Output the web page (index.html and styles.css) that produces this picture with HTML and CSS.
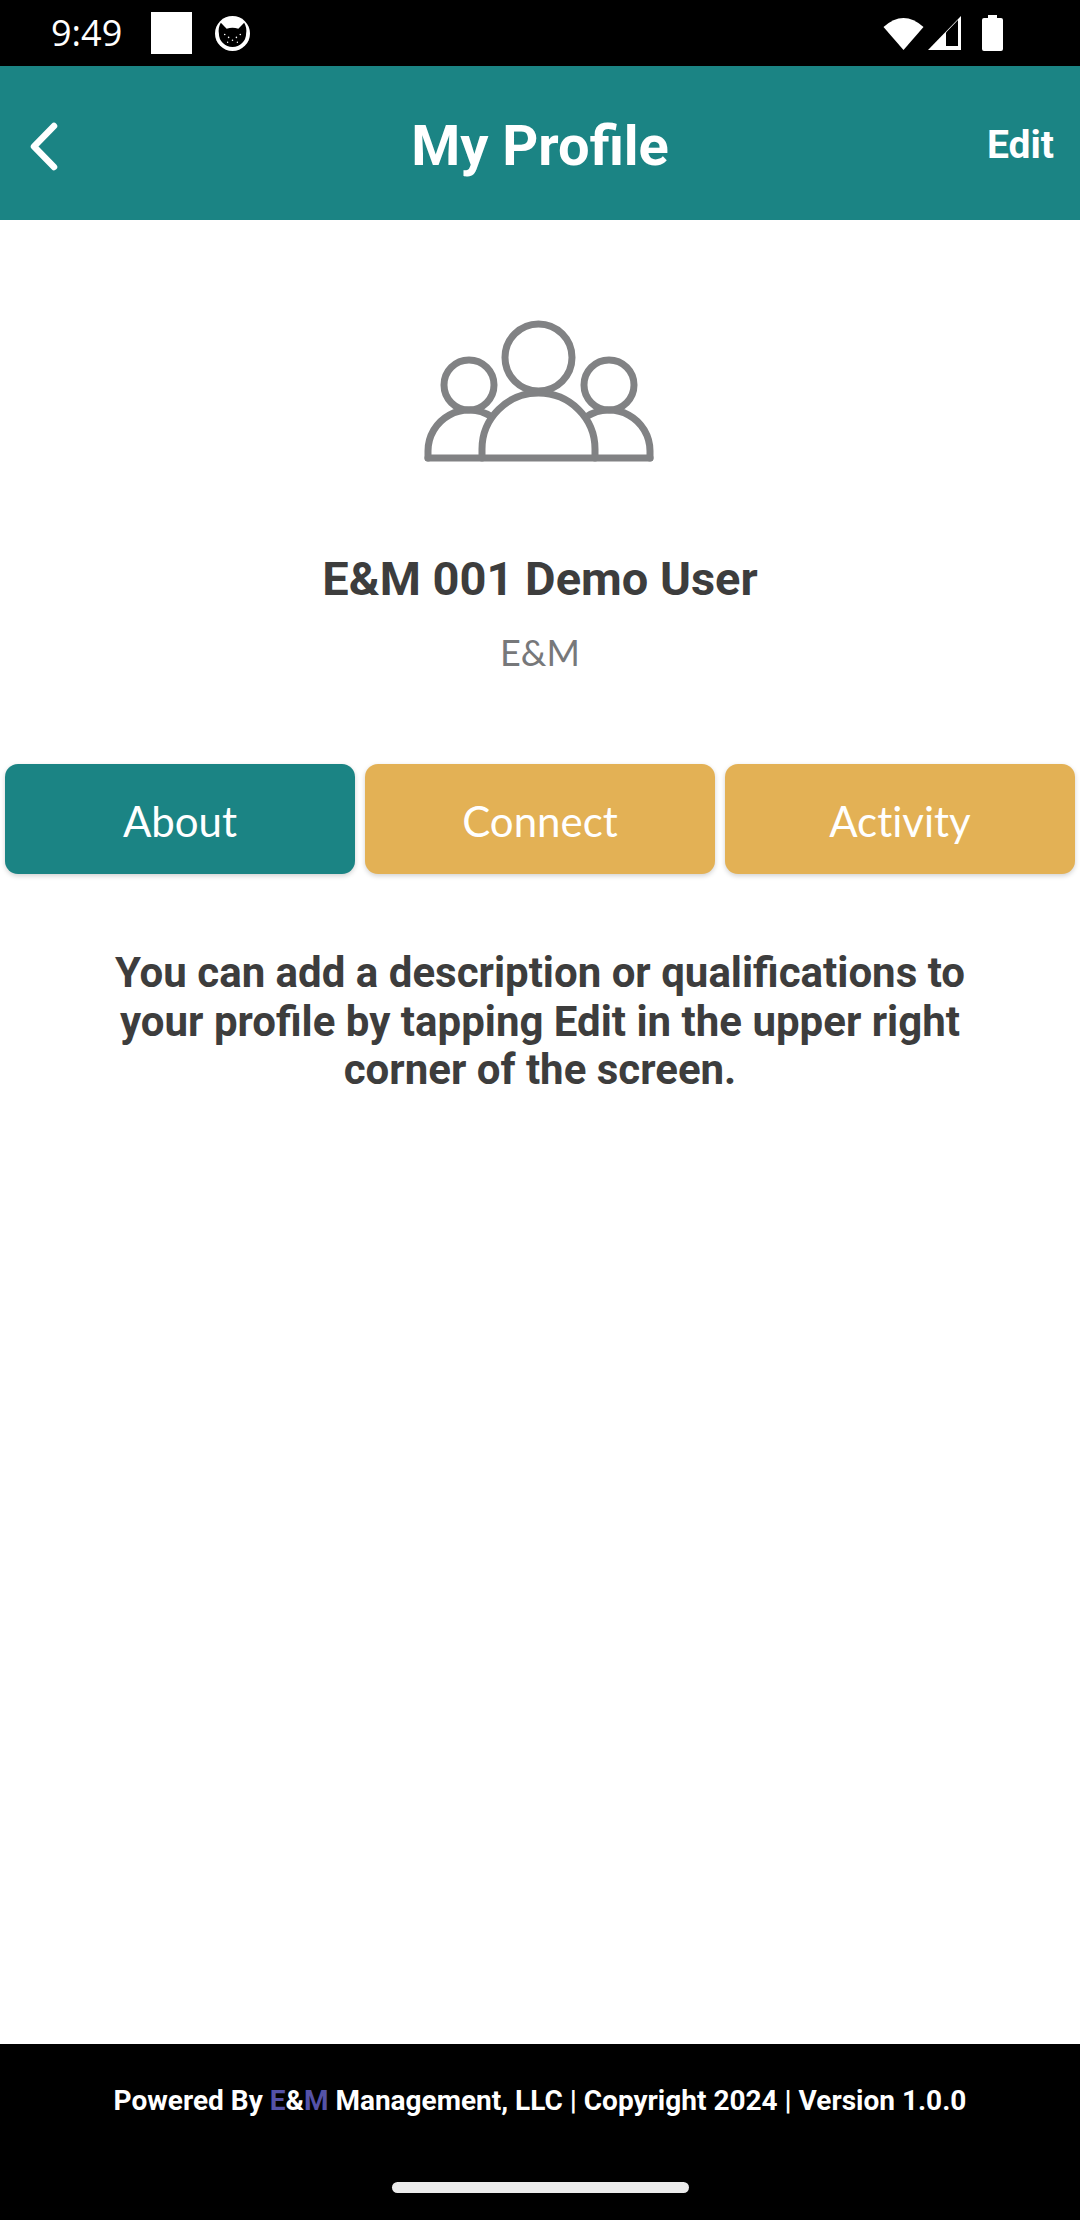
FILE: index.html
```html
<!DOCTYPE html>
<html lang="en">
<head>
<meta charset="utf-8">
<title>My Profile</title>
<link rel="stylesheet" href="styles.css">
</head>
<body>
<div class="app">
  <div class="status">
    <div class="status-left">
      <span class="time">9:49</span>
      <span class="square"></span>
      <svg class="cat" viewBox="0 0 36 36" aria-hidden="true"><circle cx="18" cy="18" r="18" fill="#fff"/><path d="M6 7 L12 13 Q18 11 24 13 L30 7 Q33 12 32 18 A14 14 0 0 1 4 18 Q3 12 6 7Z" fill="#000"/><g fill="#fff"><circle cx="10" cy="19" r=".8"/><circle cx="14" cy="22" r=".8"/><circle cx="18" cy="25" r=".8"/><circle cx="22" cy="22" r=".8"/><circle cx="26" cy="19" r=".8"/><circle cx="13" cy="27" r=".7"/><circle cx="23" cy="27" r=".7"/></g></svg>
    </div>
    <div class="status-right">
      <svg class="wifi" viewBox="0 0 40 34" aria-hidden="true"><path d="M0 11 Q20 -7 40 11 L20 34Z" fill="#fff"/></svg>
      <svg class="signal" viewBox="0 0 33 34" aria-hidden="true"><path d="M33 0 V34 H0Z" fill="#fff"/><path d="M18 16.500 L18 30 H30 V4Z" fill="#000"/></svg>
      <svg class="battery" viewBox="0 0 21 36" aria-hidden="true"><path d="M6 0 H15 V3 H19 Q21 3 21 5 V34 Q21 36 19 36 H2 Q0 36 0 34 V5 Q0 3 2 3 H6Z" fill="#fff"/></svg>
    </div>
  </div>

  <header class="topbar">
    <svg class="back" viewBox="0 0 30 50" aria-hidden="true"><path d="M25 4 L5 24.500 L25 45" fill="none" stroke="#fff" stroke-width="6.500" stroke-linecap="round" stroke-linejoin="round"/></svg>
    <h1 class="title">My Profile</h1>
    <span class="edit">Edit</span>
  </header>

  <main class="content">
    <svg class="people" viewBox="0 0 280 180" aria-hidden="true">
      <g fill="none" stroke="#818284" stroke-width="7" stroke-linejoin="round" stroke-linecap="round">
        <circle cx="138.500" cy="56.500" r="33.500"/>
        <circle cx="69" cy="84" r="25"/>
        <circle cx="209" cy="84" r="25"/>
        <path d="M28 157 V150 A41 41 0 0 1 91 115.400"/>
        <path d="M250 157 V150 A41 41 0 0 0 187 115.400"/>
        <path d="M82 157 V148 A56.500 56 0 0 1 195 148 V157"/>
        <path d="M28 157 H250"/>
      </g>
    </svg>
    <h2 class="name">E&amp;M 001 Demo User</h2>
    <p class="org">E&amp;M</p>

    <nav class="tabs">
      <div class="tab tab-active">About</div>
      <div class="tab">Connect</div>
      <div class="tab">Activity</div>
    </nav>

    <p class="desc">You can add a description or qualifications to your profile by tapping Edit in the upper right corner of the screen.</p>
  </main>

  <footer class="footer">
    <p class="legal">Powered By <span class="brand">E</span>&amp;<span class="brand">M</span> Management, LLC | Copyright 2024 | Version 1.0.0</p>
    <div class="home"></div>
  </footer>
</div>
</body>
</html>
```
FILE: styles.css
```css
* { box-sizing: border-box; }
html, body { margin: 0; padding: 0; background: #fff; }
.app { width: 1080px; height: 2220px; display: flex; flex-direction: column; font-family: Roboto, sans-serif; overflow: hidden; }

.status { height: 66px; background: #000; display: flex; justify-content: space-between; align-items: center; padding: 0 77px 0 51px; }
.status-left, .status-right { display: flex; align-items: center; }
.time { font-family: "Open Sans", sans-serif; font-size: 36px; font-weight: 400; color: #fff; line-height: 66px; width: 100px; }
.square { width: 41px; height: 42px; background: #fff; margin-right: 23px; }
.cat { width: 35px; height: 35px; }
.wifi { width: 41px; height: 34px; }
.signal { width: 33px; height: 34px; margin-left: 4px; }
.battery { width: 21px; height: 36px; margin-left: 21px; }

.topbar { height: 154px; padding-top: 6px; background: #1b8484; position: relative; display: flex; align-items: center; justify-content: center; color: #fff; }
.back { position: absolute; left: 29px; top: 56px; width: 30px; height: 50px; }
.title { margin: 0; font-size: 56px; font-weight: 700; line-height: 60px; }
.edit { position: absolute; right: 26px; top: 58px; font-size: 39px; font-weight: 700; line-height: 42px; }

.content { flex: 1; display: flex; flex-direction: column; align-items: center; background: #fff; padding-top: 81px; }
.people { width: 280px; height: 180px; display: block; }
.name { margin: 70px 0 0; font-size: 47px; font-weight: 700; color: #3d3d3d; line-height: 56px; }
.org { margin: 25px 0 0; font-family: Lato, sans-serif; font-size: 36px; color: #77787a; line-height: 40px; }

.tabs { width: 100%; display: flex; gap: 10px; padding: 0 5px; margin-top: 92px; }
.tab { flex: 1; height: 110px; padding-top: 3px; border-radius: 13px; background: #e3b155; color: #fff; font-family: Lato, sans-serif; font-size: 42px; font-variant-ligatures: none; display: flex; align-items: center; justify-content: center; box-shadow: 0 2px 5px rgba(0,0,0,.18); }
.tab-active { background: #1b8484; }

.desc { margin: 75px 0 0; width: 880px; text-align: center; font-size: 42px; font-weight: 700; line-height: 48.500px; color: #3d3d3d; }

.footer { height: 176px; background: #000; display: flex; flex-direction: column; align-items: center; }
.legal { margin: 40px 0 0; font-size: 28px; font-weight: 700; line-height: 34px; color: #fff; white-space: nowrap; }
.brand { color: #5552a8; }
.home { width: 297px; height: 11px; margin-top: 64px; background: #ebebeb; border-radius: 6px; }
```
